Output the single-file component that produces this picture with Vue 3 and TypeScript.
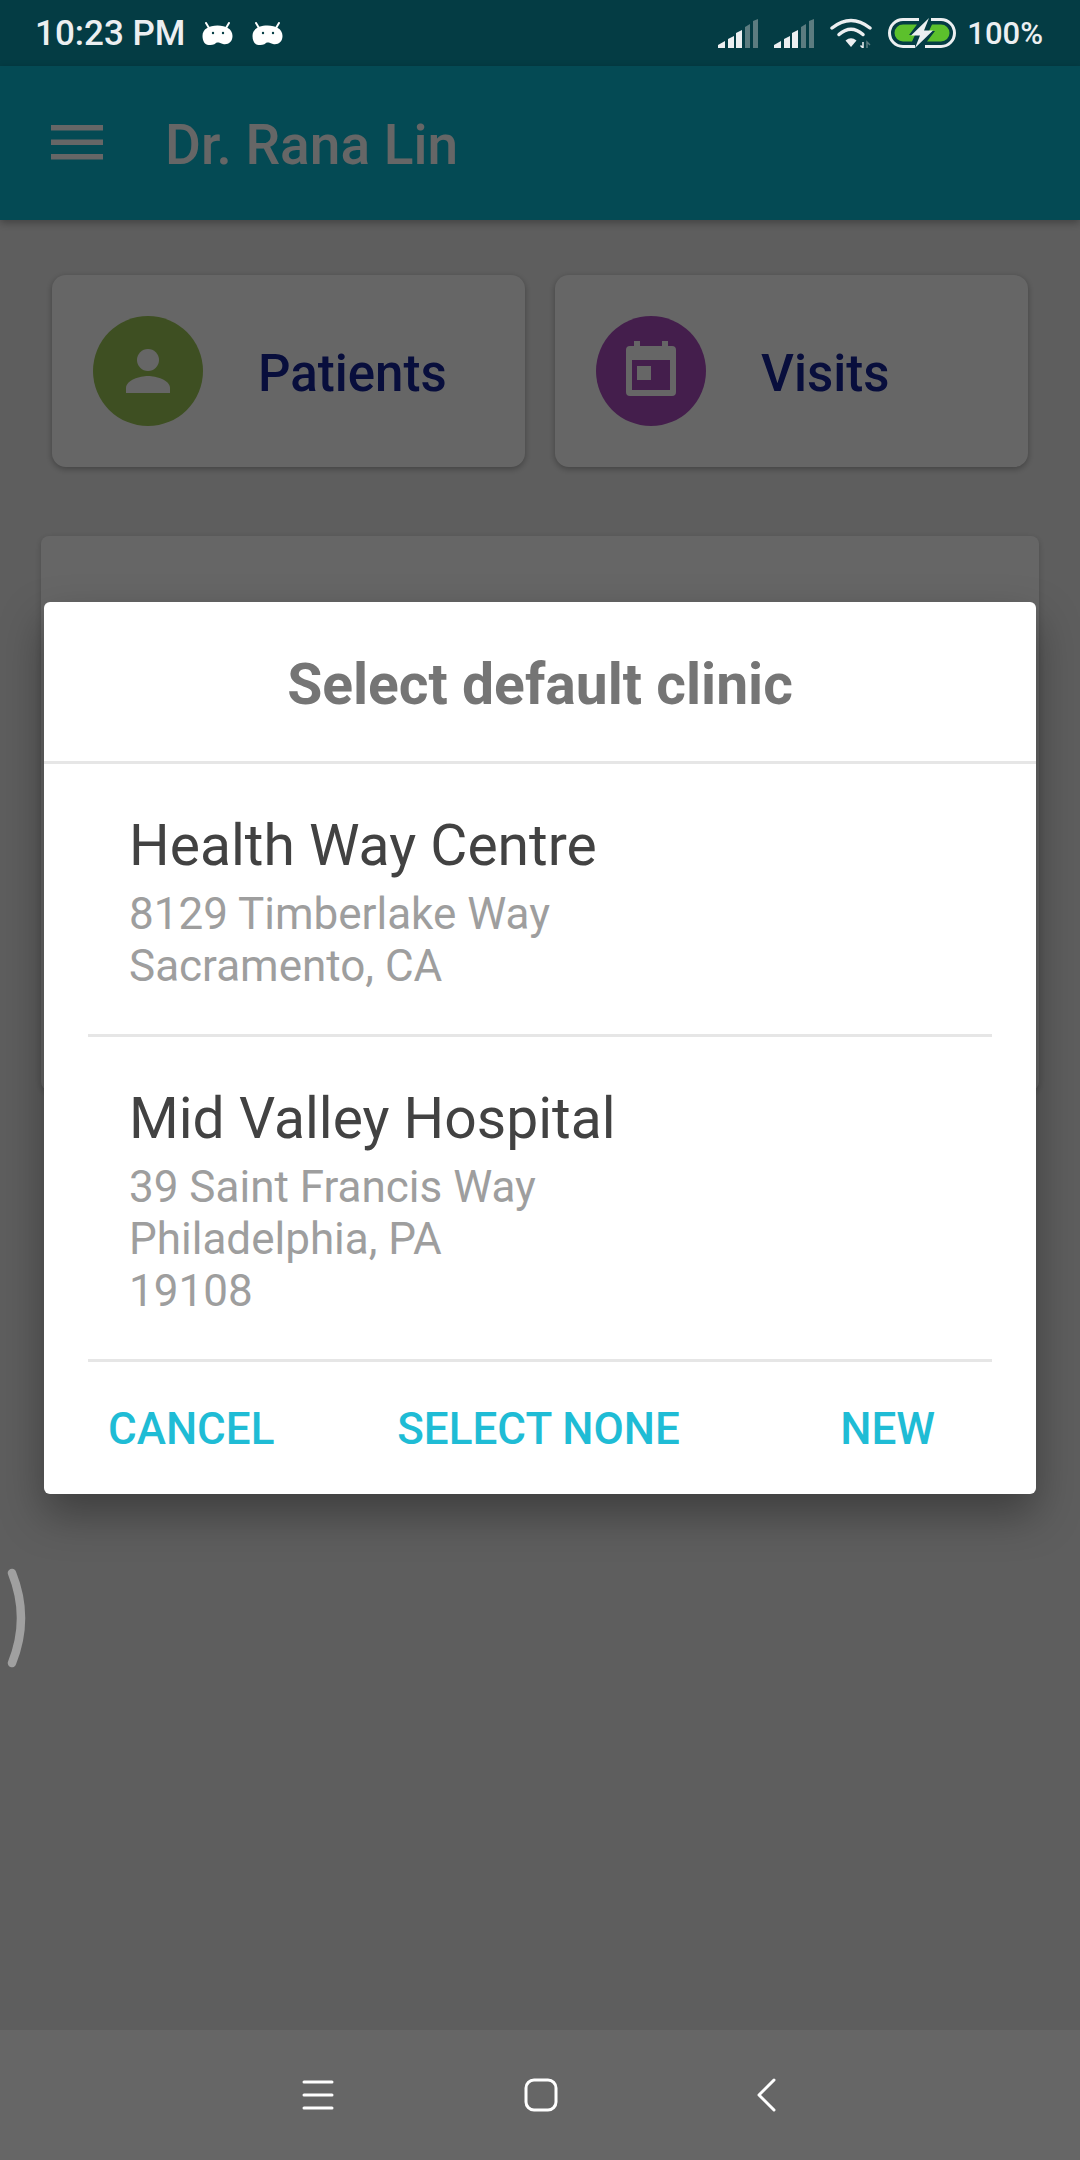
<script setup lang="ts">
const clinics = [
  { name: 'Health Way Centre', lines: ['8129 Timberlake Way', 'Sacramento, CA'] },
  { name: 'Mid Valley Hospital', lines: ['39 Saint Francis Way', 'Philadelphia, PA', '19108'] },
]
</script>

<template>
  <div class="screen">
    <div class="status-bar">
      <div class="status-left">
        <span class="time">10:23 PM</span>
        <svg v-for="n in 2" :key="n" class="bot" width="31" height="23" viewBox="0 0 31 23">
          <path d="M4 1 L7 6 M27 1 L24 6" stroke="#fff" stroke-width="2" stroke-linecap="round" />
          <path d="M0.500 14 C0.500 7 7 3.500 15.500 3.500 C24 3.500 30.500 7 30.500 14 C30.500 20 26 23 21 22 C18 21 16 20 14 21 C12 23 9 23 6.500 23 C3 23 0.500 19 0.500 14Z" fill="#fff" />
          <circle cx="11" cy="11" r="1.200" fill="#043c44" />
          <circle cx="21" cy="11" r="1.200" fill="#043c44" />
        </svg>
      </div>
      <div class="status-right">
        <svg v-for="n in 2" :key="n" width="40" height="29" viewBox="0 0 40 29">
          <polygon points="0,26 7,22 7,29 0,29" fill="#eceff1" />
          <polygon points="10,20 16,17 16,29 10,29" fill="#eceff1" />
          <polygon points="18,14 24,11 24,29 18,29" fill="#eceff1" />
          <polygon points="27,8 32,5 32,29 27,29" fill="#5c7c80" />
          <polygon points="35,2 40,0 40,29 35,29" fill="#5c7c80" />
        </svg>
        <svg width="42" height="30" viewBox="0 0 42 30">
          <path d="M2 10 Q21 -5 40 10" fill="none" stroke="#eceff1" stroke-width="3.500" stroke-linecap="round" />
          <path d="M9 16.500 Q21 6 33 16.500" fill="none" stroke="#eceff1" stroke-width="3.500" stroke-linecap="round" />
          <path d="M15.500 22.500 Q21 18 26.500 22.500 L21 29 Z" fill="#eceff1" />
          <path d="M33 24 V30 M30.500 27.500 L33 30" stroke="#eceff1" stroke-width="1.500" fill="none" />
          <path d="M37 30 V24 L40 27" stroke="#5c7c80" stroke-width="1.500" fill="none" />
        </svg>
        <svg width="68" height="30" viewBox="0 0 68 30">
          <path d="M31 1.500 H15 A13.500 13.500 0 0 0 15 28.500 H27 M37 28.500 H53 A13.500 13.500 0 0 0 53 1.500 H43" fill="none" stroke="#eceff1" stroke-width="3" />
          <path d="M29 6.500 H15 A8.500 8.500 0 0 0 15 23.500 H24 L27 17 H21 Z" fill="#5cc02c" />
          <path d="M39 23.500 H53 A8.500 8.500 0 0 0 53 6.500 H44 L41 13 H47 Z" fill="#5cc02c" />
          <path d="M41 0 L23 17.500 H32 L27 30 L45 12.500 H36 Z" fill="#eceff1" />
        </svg>
        <span class="percent">100%</span>
      </div>
    </div>

    <div class="app">
      <header class="app-bar">
        <svg class="menu" width="52" height="35" viewBox="0 0 52 35">
          <rect y="0" width="52" height="5.500" fill="#fff" />
          <rect y="14.500" width="52" height="5.500" fill="#fff" />
          <rect y="29" width="52" height="5.500" fill="#fff" />
        </svg>
        <span class="doctor">Dr. Rana Lin</span>
      </header>

      <div class="tiles">
        <div class="tile">
          <svg width="110" height="110" viewBox="0 0 110 110">
            <circle cx="55" cy="55" r="55" fill="#9bc655" />
            <circle cx="55" cy="44" r="11" fill="#fff" />
            <path d="M33 77 V72 C33 64 47 60 55 60 S77 64 77 72 V77 Z" fill="#fff" />
          </svg>
          <span class="tile-label">Patients</span>
        </div>
        <div class="tile">
          <svg width="110" height="110" viewBox="0 0 110 110">
            <circle cx="55" cy="55" r="55" fill="#aa4dbe" />
            <path fill="#fff" fill-rule="evenodd" d="M38 25 H44 V30 H66 V25 H72 V30 H76 A4 4 0 0 1 80 34 V76 A4 4 0 0 1 76 80 H34 A4 4 0 0 1 30 76 V34 A4 4 0 0 1 34 30 H38 Z M36 44 V74 H74 V44 Z" />
            <rect x="41" y="50" width="14" height="14" fill="#fff" />
          </svg>
          <span class="tile-label">Visits</span>
        </div>
      </div>

      <div class="panel"></div>

      <div class="scrim">
        <div class="dialog">
          <div class="dialog-title">Select default clinic</div>
          <div v-for="clinic in clinics" :key="clinic.name" class="clinic">
            <div class="clinic-name">{{ clinic.name }}</div>
            <div v-for="line in clinic.lines" :key="line" class="clinic-line">{{ line }}</div>
          </div>
          <div class="actions">
            <span class="action cancel">CANCEL</span>
            <span class="action select">SELECT NONE</span>
            <span class="action new">NEW</span>
          </div>
        </div>
      </div>
    </div>

    <nav class="nav-bar">
      <svg width="32" height="32" viewBox="0 0 32 32">
        <path d="M2 3 H30 M2 16 H30 M2 29 H30" stroke="#fff" stroke-width="3" stroke-linecap="round" />
      </svg>
      <svg width="34" height="34" viewBox="0 0 34 34">
        <rect x="2" y="2" width="30" height="30" rx="8" fill="none" stroke="#fff" stroke-width="3" />
      </svg>
      <svg class="back" width="22" height="34" viewBox="0 0 22 34">
        <path d="M18 2 L3 17 L18 32" fill="none" stroke="#fff" stroke-width="3" stroke-linecap="round" stroke-linejoin="round" />
      </svg>
    </nav>

    <svg class="swipe" width="30" height="104" viewBox="0 0 30 104">
      <path d="M12 5 Q30 50 12 95" fill="none" stroke="#a0a0a0" stroke-width="8.500" stroke-linecap="round" />
    </svg>
  </div>
</template>

<style>
html,
body {
  margin: 0;
  background: #5e5e5e;
}
</style>

<style scoped>
.screen {
  position: relative;
  width: 1080px;
  height: 2160px;
  display: flex;
  flex-direction: column;
  overflow: hidden;
  font-family: Roboto, "Liberation Sans", sans-serif;
}

.status-bar {
  height: 66px;
  flex: none;
  display: flex;
  align-items: center;
  justify-content: space-between;
  padding: 0 37px 0 35px;
  box-sizing: border-box;
  background: #043c44;
  color: #eceff1;
}
.status-left,
.status-right {
  display: flex;
  align-items: center;
}
.status-left {
  gap: 19px;
}
.status-right {
  gap: 16px;
}
.time {
  font-size: 35px;
  font-weight: 500;
  margin-right: -2px;
}
.percent {
  font-size: 31px;
  font-weight: 500;
  margin-left: -5px;
}

.app {
  position: relative;
  flex: 1;
  background: #ebebeb;
}
.app-bar {
  height: 154px;
  display: flex;
  align-items: center;
  padding-left: 51px;
  background: #0cb9d2;
  box-shadow: 0 3px 8px rgba(0, 0, 0, 0.3);
}
.menu {
  margin-right: 62px;
  margin-top: -1px;
}
.doctor {
  font-size: 55px;
  font-weight: 500;
  color: #fff;
  padding-top: 3px;
}

.tiles {
  display: flex;
  gap: 30px;
  padding: 55px 52px 0;
}
.tile {
  flex: 1;
  height: 192px;
  display: flex;
  align-items: center;
  gap: 55px;
  padding-left: 41px;
  background: #fff;
  border-radius: 14px;
  box-shadow: 0 2px 6px rgba(0, 0, 0, 0.3);
}
.tile-label {
  font-size: 51px;
  font-weight: 500;
  color: #142396;
  padding-top: 5px;
}

.panel {
  height: 554px;
  margin: 69px 41px 0;
  background: #fff;
  border-radius: 8px;
  box-shadow: 0 2px 6px rgba(0, 0, 0, 0.2);
}

.scrim {
  position: absolute;
  inset: 0;
  display: flex;
  align-items: center;
  justify-content: center;
  background: rgba(0, 0, 0, 0.6);
}
.dialog {
  width: 992px;
  background: #fff;
  border-radius: 6px;
  box-shadow: 0 20px 44px rgba(0, 0, 0, 0.35);
}
.dialog-title {
  height: 162px;
  padding-top: 5px;
  box-sizing: border-box;
  display: flex;
  align-items: center;
  justify-content: center;
  font-size: 57px;
  font-weight: 700;
  color: #757575;
  border-bottom: 3px solid #e6e6e6;
}
.clinic {
  margin: 0 44px;
  padding: 50px 41px 42px;
  border-bottom: 3px solid #e6e6e6;
}
.clinic-name {
  font-size: 57px;
  line-height: 64px;
  color: #424242;
  margin-bottom: 10px;
}
.clinic-line {
  font-size: 44px;
  line-height: 52px;
  color: #9e9e9e;
}
.actions {
  height: 132px;
  padding-top: 2px;
  box-sizing: border-box;
  display: grid;
  grid-template-columns: 1fr auto 1fr;
  align-items: center;
}
.action {
  font-size: 44px;
  font-weight: 500;
  color: #1fbcd5;
}
.cancel {
  justify-self: start;
  padding-left: 64px;
}
.select {
  margin-left: -3px;
}
.new {
  justify-self: end;
  padding-right: 101px;
}

.nav-bar {
  height: 130px;
  flex: none;
  display: flex;
  align-items: center;
  column-gap: 190px;
  padding-left: 302px;
  box-sizing: border-box;
  background: #666;
}
.back {
  margin-left: 8px;
}

.swipe {
  position: absolute;
  left: 0;
  top: 1568px;
}
</style>
